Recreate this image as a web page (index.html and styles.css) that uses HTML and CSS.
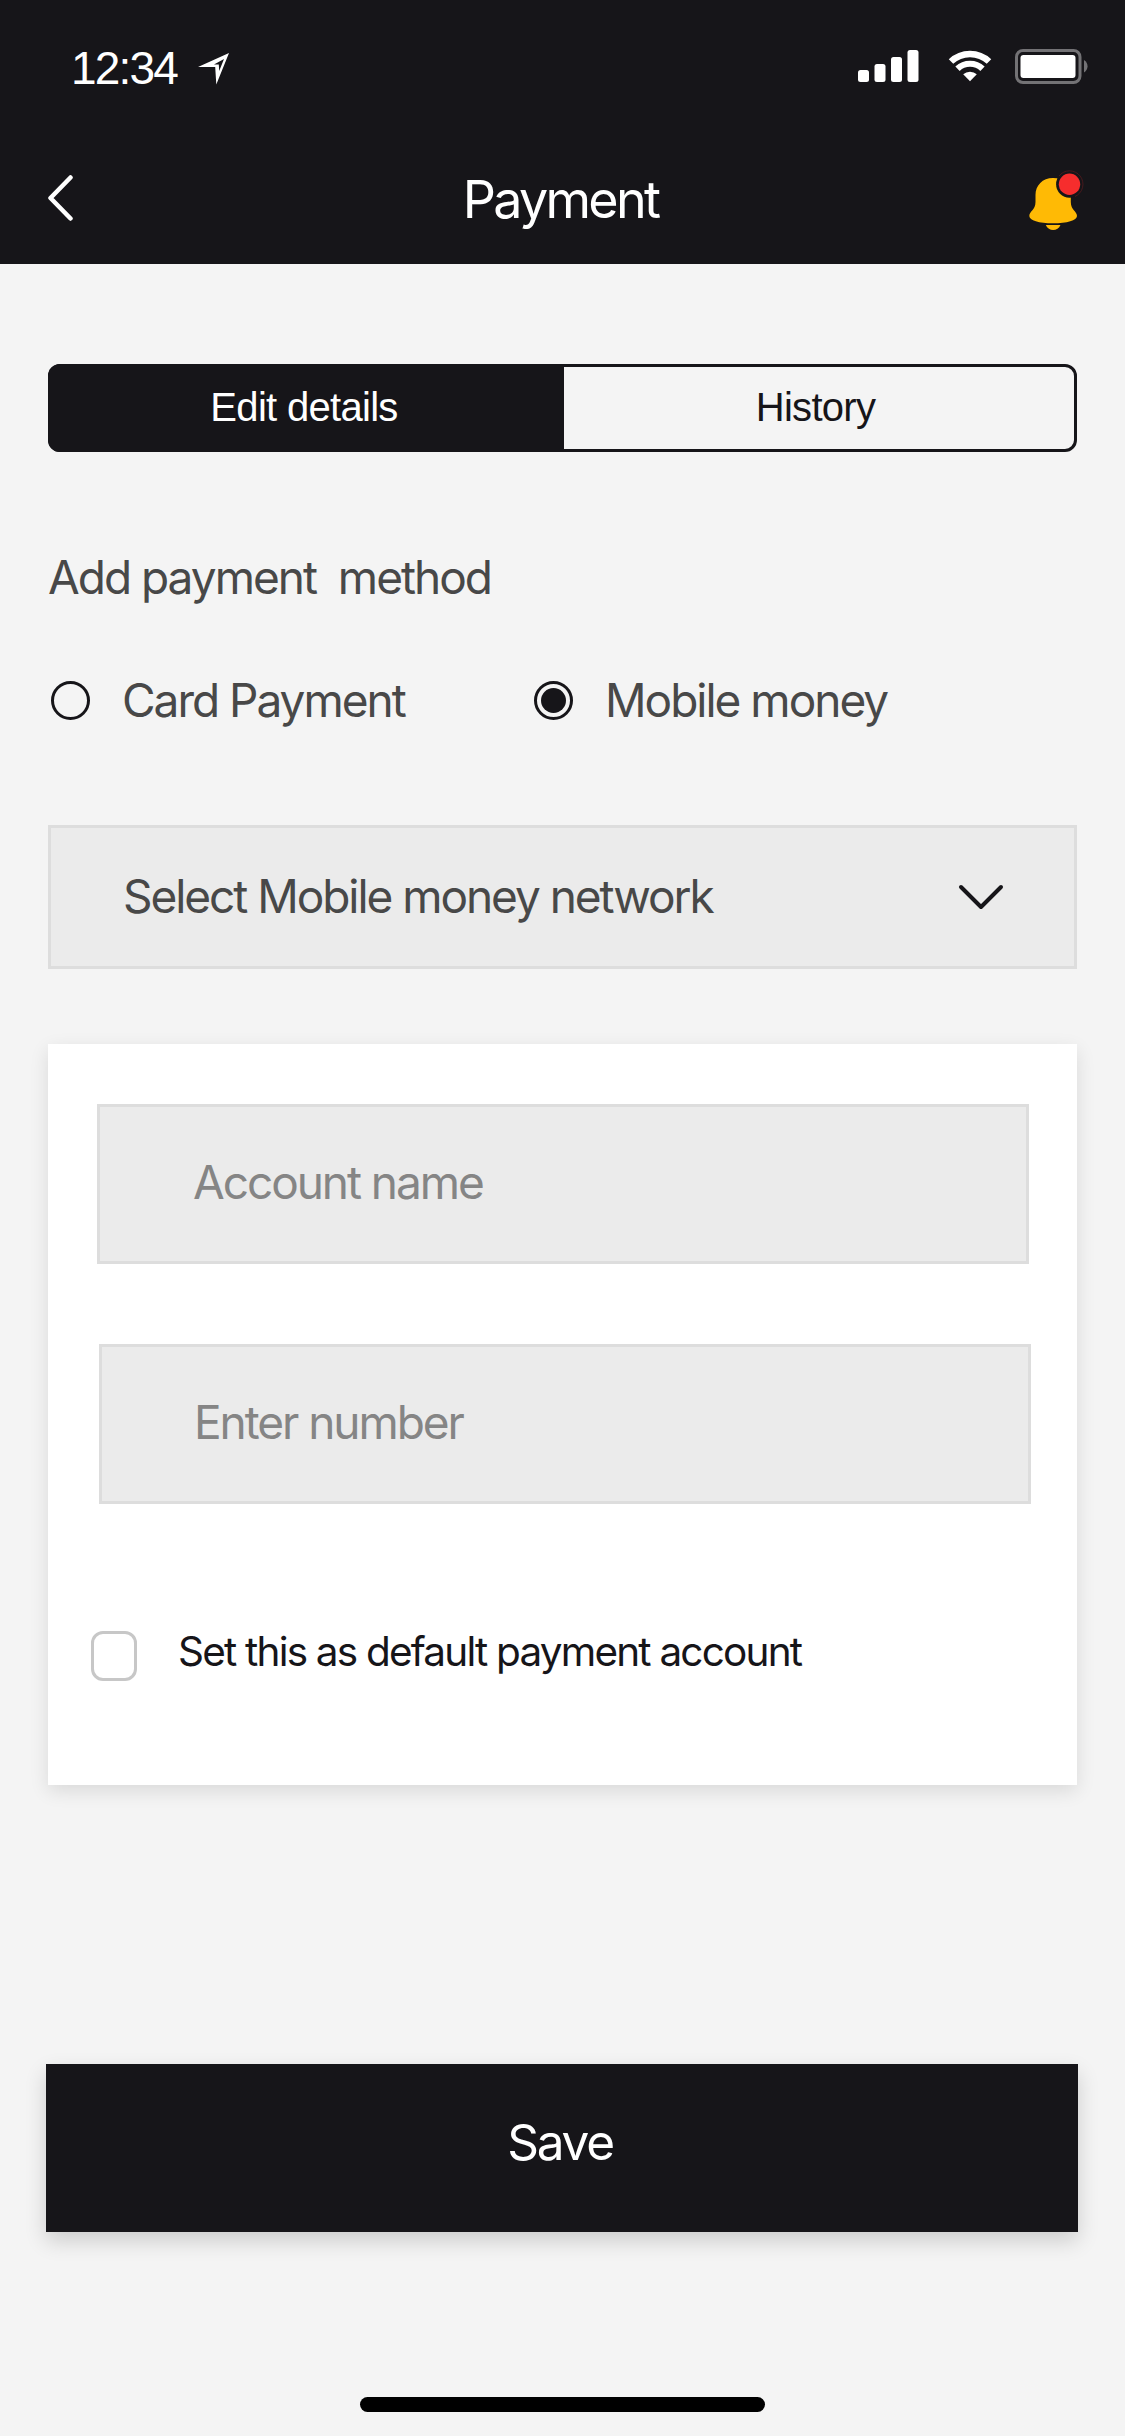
FILE: index.html
```html
<!DOCTYPE html>
<html lang="en">
<head>
<meta charset="utf-8">
<title>Payment</title>
<link rel="stylesheet" href="styles.css">
</head>
<body>
<header class="header">
  <div class="status-bar">
    <div class="status-left">
      <span class="time">12:34</span>
      <svg class="location" width="32" height="32" viewBox="0 0 32 32"><path fill="#fff" fill-rule="evenodd" d="M0 14 31 0 18.300 31.500 17.200 14ZM16 11.500h4.800L21.200 18 26 6Z"/></svg>
    </div>
    <div class="status-right">
      <svg width="61" height="33" viewBox="0 0 61 33" fill="#fff"><rect x="0" y="21" width="11" height="12" rx="2.500"/><rect x="16.500" y="15" width="11" height="18" rx="2.500"/><rect x="33" y="8" width="11" height="25" rx="2.500"/><rect x="49.500" y="1" width="11" height="32" rx="2.500"/></svg>
      <svg class="wifi" width="44" height="32" viewBox="0 0 44 32" fill="none" stroke="#fff"><path stroke-width="6.500" d="M3 11.500a27.500 27.500 0 0 1 38 0"/><path stroke-width="6.200" d="M9.500 18.800a18 18 0 0 1 25 0"/><path fill="#fff" stroke="none" d="M15.200 24.300a10 10 0 0 1 13.600 0L22 31.300Z"/></svg>
      <svg width="73" height="35" viewBox="0 0 73 35"><rect x="1.500" y="1.500" width="63.500" height="32" rx="6.500" fill="none" stroke="#737275" stroke-width="3"/><rect x="5.500" y="6" width="55" height="23" rx="3" fill="#fff"/><path fill="#737275" d="M69 11c4.700 2.500 4.700 10 0 12.500Z"/></svg>
    </div>
  </div>
  <div class="nav">
    <svg class="back" width="25" height="46" viewBox="0 0 25 46" fill="none" stroke="#fff" stroke-width="4.500" stroke-linecap="round" stroke-linejoin="round"><path d="M22.500 2.500 2.500 23l20 20.500"/></svg>
    <h1 class="title">Payment</h1>
    <svg class="bell" width="56" height="62" viewBox="0 0 56 62"><path fill="#ffba05" d="M24 8C13.500 8 6.500 15.500 6.500 25v7C6.500 40.500.3 41 .3 46c0 4.500 9.700 7.300 23.700 7.300S48 50.500 48 46c0-5-6.200-5.500-6.200-14V25C41.800 15.500 34.500 8 24 8Z"/><path fill="#ffba05" d="M16.800 55h14.700c-2.700 6.600-12 6.600-14.700 0Z"/><circle cx="40.500" cy="14.300" r="13.400" fill="#161519"/><path fill="none" stroke="#7a1e23" stroke-width=".5" d="M30 6a13.400 13.400 0 1 1 16 20.500"/><circle cx="40.500" cy="14.300" r="10.700" fill="#f62d2d"/></svg>
  </div>
</header>
<main class="content">
  <div class="tabs"><button class="tab tab-active">Edit details</button><button class="tab">History</button></div>
  <h2 class="section-title">Add payment&nbsp; method</h2>
  <div class="methods">
    <label class="method"><span class="radio"></span><span>Card Payment</span></label>
    <label class="method"><span class="radio radio-on"></span><span>Mobile money</span></label>
  </div>
  <div class="select"><span>Select Mobile money network</span><svg class="chevron" width="46" height="26" viewBox="0 0 46 26" fill="none" stroke="#161519" stroke-width="4" stroke-linecap="round" stroke-linejoin="round"><path d="M3 3l20 20L43 3"/></svg></div>
  <section class="card">
    <div class="field">Account name</div>
    <div class="field field-number">Enter number</div>
    <label class="default"><span class="checkbox"></span><span class="default-text">Set this as default payment account</span></label>
  </section>
  <button class="save">Save</button>
  <div class="home-bar"></div>
</main>
</body>
</html>
```
FILE: styles.css
```css
* { box-sizing: border-box; }
body { margin: 0; width: 1125px; height: 2436px; overflow: hidden; background: #f4f4f4; color: #161519; font-family: Inter, "Liberation Sans", sans-serif; }
h1, h2 { margin: 0; font-weight: 400; }
button { padding: 0; border: 0; color: inherit; font: inherit; }
svg { display: block; flex: none; }

.header { height: 264px; background: #161519; color: #fff; }
.status-bar { display: flex; justify-content: space-between; height: 135px; padding: 0 37px 0 71px; }
.status-left { display: flex; align-items: flex-start; padding-top: 43px; }
.time { font: 46px/50px "Liberation Sans", Arial, sans-serif; letter-spacing: -1.8px; }
.location { margin: 10px 0 0 21px; }
.status-right { display: flex; align-items: flex-start; padding-top: 49px; }
.wifi { margin: 1px 23px 0 29px; }
.nav { display: grid; grid-template-columns: 1fr auto 1fr; align-items: start; height: 129px; padding: 35px 48px 0; }
.back { margin-top: 5px; }
.title { padding-right: 4px; font-size: 52px; line-height: 60px; letter-spacing: -2.7px; }
.bell { justify-self: end; margin-right: -8px; }

.content { display: flex; flex-direction: column; padding: 100px 48px 0; }
.tabs { display: flex; height: 87.5px; border: 3px solid #161519; border-radius: 12px; }
.tab { flex: 1; padding: 0 7px 1px 0; background: transparent; font: 40px/44px "Liberation Sans", Arial, sans-serif; letter-spacing: -.7px; }
.tab-active { flex: 0 0 516px; margin: -3px 0 -3px -3px; padding-right: 4px; border-radius: 12px 0 0 12px; background: #161519; color: #fff; }
.section-title { margin-top: 95.5px; font-size: 46px; line-height: 60px; letter-spacing: -2px; color: #484848; }
.methods { display: flex; margin-top: 63px; color: #484848; font-size: 46px; line-height: 60px; letter-spacing: -2px; }
.method { display: flex; align-items: center; width: 483px; padding-left: 3px; gap: 32px; }
.radio { flex: none; display: grid; place-items: center; width: 39px; height: 39px; border: 3px solid #161519; border-radius: 50%; }
.radio-on::after { content: ""; width: 25px; height: 25px; border-radius: 50%; background: #161519; }
.select { display: flex; align-items: center; justify-content: space-between; height: 144px; margin-top: 95px; padding: 0 70px 3px 72px; border: 3px solid #ddd; background: #ebebeb; color: #484848; font-size: 46px; letter-spacing: -2.05px; }
.chevron { margin-top: 2px; }

.card { height: 741px; margin-top: 75px; padding: 60px 48px 0 49px; background: #fff; box-shadow: 0 6px 18px rgba(0,0,0,.11); }
.field { display: flex; align-items: center; width: 932px; height: 160px; padding: 0 0 4px 93px; border: 3px solid #ddd; background: #ebebeb; color: #858585; font-size: 46px; letter-spacing: -2.05px; }
.field-number { margin: 80px 0 0 2px; padding-left: 92px; }
.default { display: flex; margin: 127px 0 0 -6px; gap: 41px; font-size: 40.5px; line-height: 42px; letter-spacing: -1.8px; }
.checkbox { width: 46px; height: 50px; border: 3px solid #c7c7c7; border-radius: 12px; }
.save { height: 168px; margin: 279px -1px 0 -2px; padding: 0 4px 13px 0; background: #161519; color: #fff; font-size: 49.5px; letter-spacing: -2.2px; box-shadow: 0 9px 20px rgba(0,0,0,.16); }
.home-bar { align-self: center; width: 405px; height: 15px; margin-top: 165px; border-radius: 8px; background: #000; }
```
